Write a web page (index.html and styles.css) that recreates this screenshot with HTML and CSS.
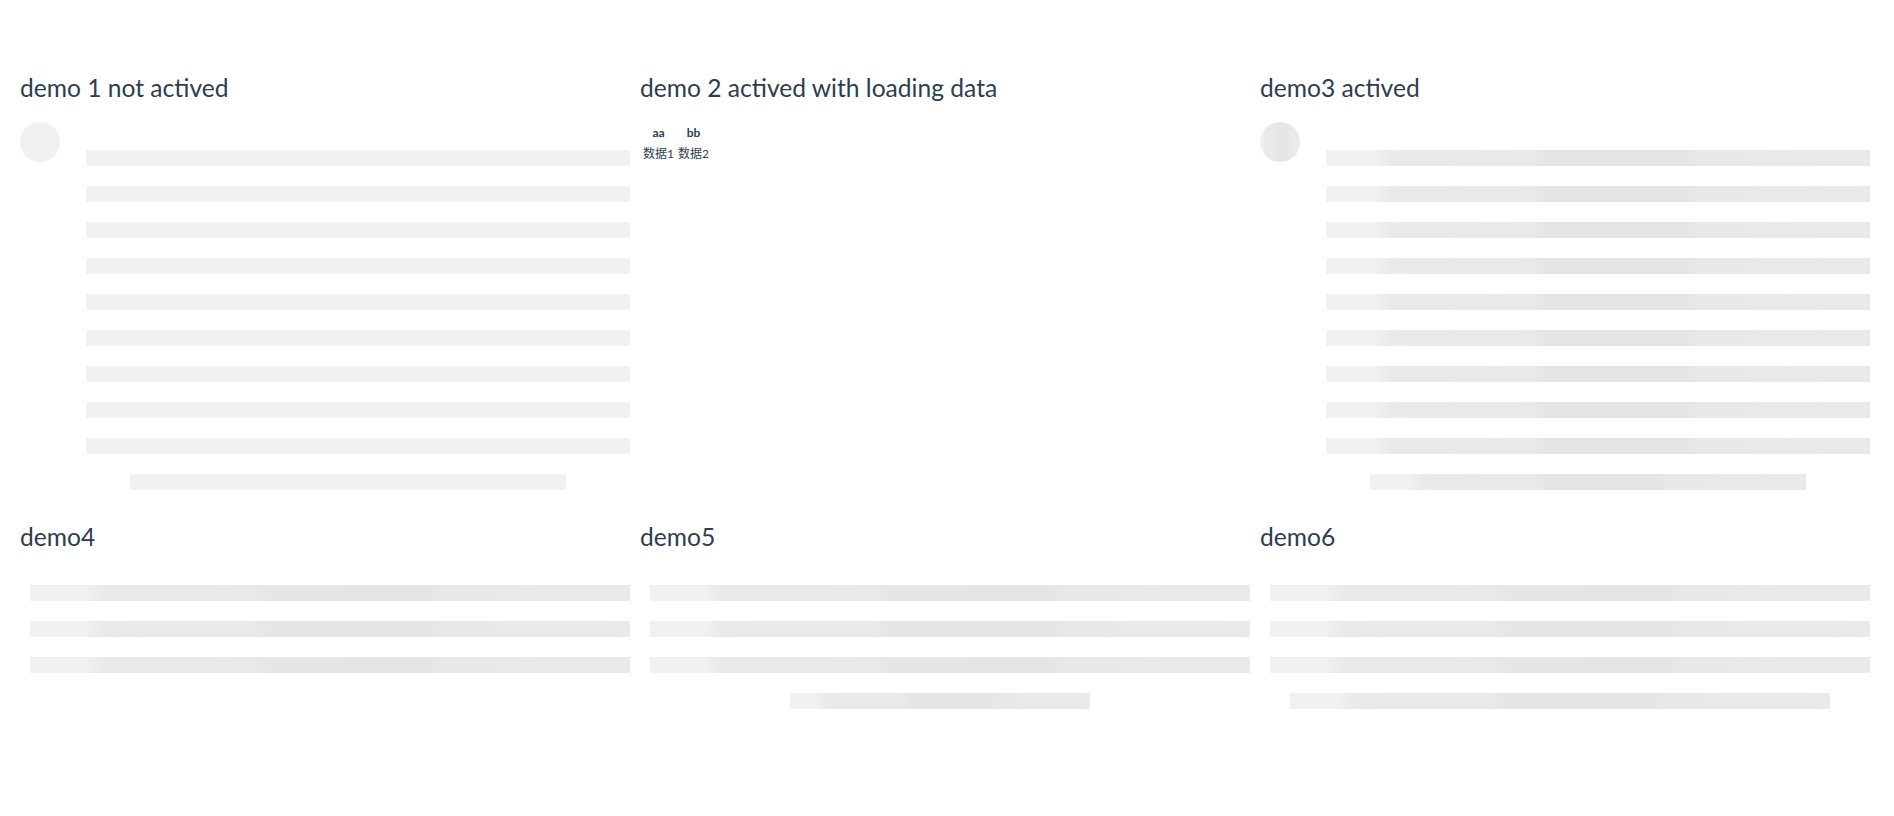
FILE: index.html
```html
<!DOCTYPE html>
<html lang="en">
<head>
<meta charset="utf-8">
<title>skeleton demos</title>
<link rel="stylesheet" href="styles.css">
</head>
<body>
<div class="page">
  <section class="demo">
    <h2 class="demo-title">demo 1 not actived</h2>
    <div class="skeleton skeleton--avatar">
      <div class="sk-avatar"></div>
      <div class="sk-rows">
        <div class="sk-row"></div>
        <div class="sk-row"></div>
        <div class="sk-row"></div>
        <div class="sk-row"></div>
        <div class="sk-row"></div>
        <div class="sk-row"></div>
        <div class="sk-row"></div>
        <div class="sk-row"></div>
        <div class="sk-row"></div>
        <div class="sk-row sk-row--w80"></div>
      </div>
    </div>
  </section>

  <section class="demo">
    <h2 class="demo-title">demo 2 actived with loading data</h2>
    <table class="data-table">
      <thead>
        <tr><th>aa</th><th>bb</th></tr>
      </thead>
      <tbody>
        <tr><td>数据1</td><td>数据2</td></tr>
      </tbody>
    </table>
  </section>

  <section class="demo">
    <h2 class="demo-title">demo3 actived</h2>
    <div class="skeleton skeleton--avatar skeleton--active">
      <div class="sk-avatar"></div>
      <div class="sk-rows">
        <div class="sk-row"></div>
        <div class="sk-row"></div>
        <div class="sk-row"></div>
        <div class="sk-row"></div>
        <div class="sk-row"></div>
        <div class="sk-row"></div>
        <div class="sk-row"></div>
        <div class="sk-row"></div>
        <div class="sk-row"></div>
        <div class="sk-row sk-row--w80"></div>
      </div>
    </div>
  </section>

  <section class="demo">
    <h2 class="demo-title">demo4</h2>
    <div class="skeleton skeleton--active">
      <div class="sk-rows">
        <div class="sk-row"></div>
        <div class="sk-row"></div>
        <div class="sk-row"></div>
      </div>
    </div>
  </section>

  <section class="demo">
    <h2 class="demo-title">demo5</h2>
    <div class="skeleton skeleton--active">
      <div class="sk-rows">
        <div class="sk-row"></div>
        <div class="sk-row"></div>
        <div class="sk-row"></div>
        <div class="sk-row sk-row--w50"></div>
      </div>
    </div>
  </section>

  <section class="demo">
    <h2 class="demo-title">demo6</h2>
    <div class="skeleton skeleton--active">
      <div class="sk-rows">
        <div class="sk-row"></div>
        <div class="sk-row"></div>
        <div class="sk-row"></div>
        <div class="sk-row sk-row--w90"></div>
      </div>
    </div>
  </section>
</div>
</body>
</html>
```

FILE: styles.css
```css
html, body {
  margin: 0;
  padding: 0;
  background: #ffffff;
}

body {
  font-family: Lato, "Noto Sans CJK SC", sans-serif;
  color: #2c3e50;
  -webkit-font-smoothing: antialiased;
}

.page {
  display: grid;
  grid-template-columns: repeat(3, 610px);
  column-gap: 10px;
  row-gap: 31px;
  align-items: start;
  padding: 72px 0 0 20px;
}

.demo {
  min-width: 0;
}

.demo-title {
  margin: 0 0 18px;
  font-size: 24.6px;
  line-height: 32px;
  font-weight: 400;
  white-space: nowrap;
}

/* skeleton */
.skeleton {
  display: flex;
  align-items: flex-start;
}

.sk-avatar {
  flex: none;
  width: 40px;
  height: 40px;
  border-radius: 50%;
  margin-right: 16px;
  background: #f1f1f1;
}

.sk-rows {
  flex: 1;
  min-width: 0;
  display: flex;
  flex-direction: column;
  gap: 20px;
  padding: 14px 0 0 10px;
}

.skeleton--avatar .sk-rows {
  padding-top: 28px;
}

.sk-row {
  height: 16px;
  background: #f1f1f1;
}

.sk-row--w80 {
  width: 80%;
  margin-left: calc(10% - 10px);
}

.sk-row--w50 {
  width: 50%;
  margin-left: calc(25% - 10px);
}

.sk-row--w90 {
  width: 90%;
  margin-left: calc(5% - 10px);
}

.skeleton--active .sk-row,
.skeleton--active .sk-avatar {
  background: linear-gradient(90deg,
    #f1f1f1 0%,
    #f1f1f1 9%,
    #eaeaea 12%,
    #e9e9e9 37%,
    #e6e6e6 40%,
    #e5e5e5 66%,
    #e8e8e8 69%,
    #e8e8e8 76%,
    #e9e9e9 79%,
    #eaeaea 100%);
}

/* table */
.data-table {
  font-size: 12px;
  color: #2c3e50;
}

.data-table th {
  font-weight: 700;
}
```
